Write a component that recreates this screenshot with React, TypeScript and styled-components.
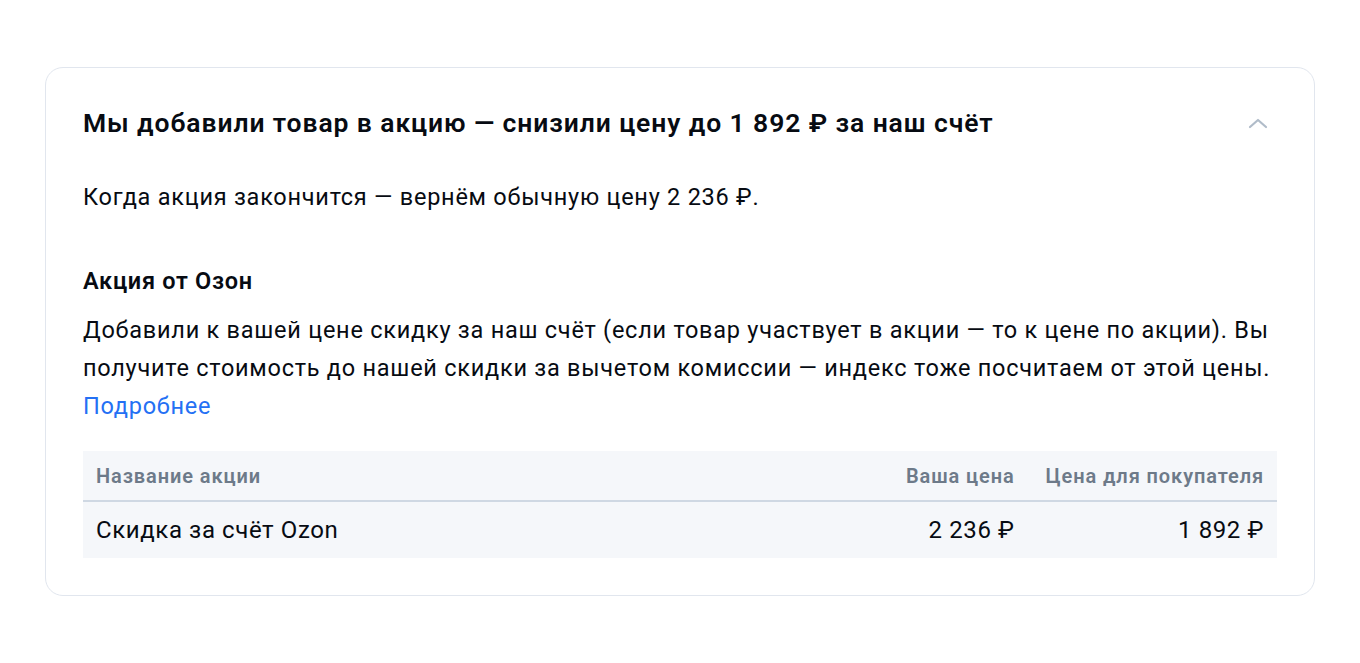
import React from "react";
import styled, { createGlobalStyle } from "styled-components";

const GlobalStyle = createGlobalStyle`
  html, body {
    margin: 0;
    padding: 0;
    background: #ffffff;
    font-family: Roboto, "Noto Sans", Arial, sans-serif;
    color: #070b12;
  }
`;

type PromoRow = {
  name: string;
  yourPrice: string;
  buyerPrice: string;
};

const rows: PromoRow[] = [
  { name: "Скидка за счёт Ozon", yourPrice: "2 236 ₽", buyerPrice: "1 892 ₽" },
];

const Page = styled.div`
  padding: 67px 45px 0 45px;
`;

const Card = styled.section`
  border: 1.5px solid #e1e6ee;
  border-radius: 18px;
  padding: 37px 37px 37px 37px;
`;

const Header = styled.div`
  display: flex;
  align-items: center;
  justify-content: space-between;
`;

const Title = styled.h2`
  margin: 0;
  font-size: 26.5px;
  font-weight: 600;
  line-height: 36px;
  letter-spacing: 0.9px;
`;

const ToggleButton = styled.button`
  border: none;
  background: none;
  padding: 0;
  margin-right: 8px;
  display: flex;
  align-items: center;
  cursor: pointer;
`;

const Lead = styled.p`
  margin: 37px 0 0 0;
  font-size: 23.5px;
  line-height: 38px;
  letter-spacing: 0.75px;
`;

const SubTitle = styled.h3`
  margin: 50px 0 0 0;
  font-size: 23.5px;
  font-weight: 600;
  line-height: 30px;
  letter-spacing: 0.7px;
`;

const Text = styled.p`
  margin: 15px 0 0 0;
  font-size: 23.5px;
  line-height: 38px;
  letter-spacing: 0.75px;
`;

const MoreLink = styled.a`
  color: #2470f4;
  text-decoration: none;
`;

const Table = styled.table`
  width: 100%;
  margin-top: 26px;
  border-collapse: collapse;
  background: #f5f7fa;
`;

const Th = styled.th<{ $right?: boolean }>`
  padding: ${(p) => (p.$right ? "0 13px 0 18px" : "0 13px")};
  width: ${(p) => (p.$right ? "auto" : "100%")};
  height: 49px;
  text-align: ${(p) => (p.$right ? "right" : "left")};
  font-size: 20px;
  font-weight: 600;
  letter-spacing: 0.9px;
  color: #6d7a89;
  border-bottom: 2px solid #cfd8e3;
  white-space: nowrap;
`;

const Td = styled.td<{ $right?: boolean }>`
  padding: ${(p) => (p.$right ? "0 13px 0 18px" : "0 13px")};
  height: 56px;
  text-align: ${(p) => (p.$right ? "right" : "left")};
  font-size: 24px;
  letter-spacing: 0.6px;
  color: #070b12;
  white-space: nowrap;
`;

const ChevronUp = () => (
  <svg width="22" height="12" viewBox="0 0 22 12" fill="none">
    <path
      d="M3 10 L11 3 L19 10"
      stroke="#b0bcc9"
      strokeWidth="2.2"
      strokeLinecap="round"
      strokeLinejoin="round"
    />
  </svg>
);

const App = () => {
  return (
    <Page>
      <GlobalStyle />
      <Card>
        <Header>
          <Title>Мы добавили товар в акцию — снизили цену до 1 892 ₽ за наш счёт</Title>
          <ToggleButton aria-label="Свернуть">
            <ChevronUp />
          </ToggleButton>
        </Header>

        <Lead>Когда акция закончится — вернём обычную цену 2 236 ₽.</Lead>

        <SubTitle>Акция от Озон</SubTitle>
        <Text>
          Добавили к вашей цене скидку за наш счёт (если товар участвует в акции — то к цене по
          акции). Вы получите стоимость до нашей скидки за вычетом комиссии — индекс тоже посчитаем
          от этой цены.
          <br />
          <MoreLink href="#">Подробнее</MoreLink>
        </Text>

        <Table>
          <thead>
            <tr>
              <Th>Название акции</Th>
              <Th $right>Ваша цена</Th>
              <Th $right>Цена для покупателя</Th>
            </tr>
          </thead>
          <tbody>
            {rows.map((row, index) => (
              <tr key={index}>
                <Td>{row.name}</Td>
                <Td $right>{row.yourPrice}</Td>
                <Td $right>{row.buyerPrice}</Td>
              </tr>
            ))}
          </tbody>
        </Table>
      </Card>
    </Page>
  );
};

export default App;
